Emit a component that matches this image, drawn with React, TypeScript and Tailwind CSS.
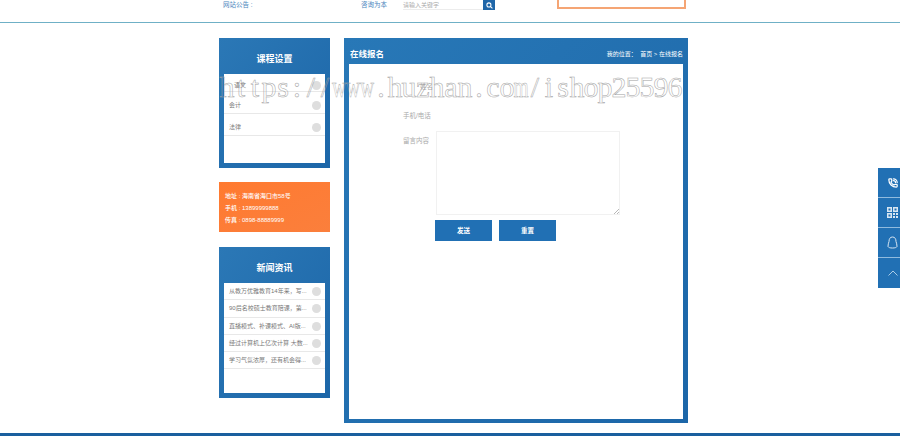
import React from "react";
import { PhoneCall } from "lucide-react";

const wm = "https://www.huzhan.com/ishop25596".split("");
const courses = ["语文", "会计", "法律"];
const news = ["从教万优雅教育14年来，写...", "90后名校硕士教育陪课，第...", "直播模式、补课模式、AI版...", "经过计算机上亿次计算 大数...", "学习气氛浓厚，还有机会得..."];

function Dot() {
  return <span className="w-[9px] h-[9px] rounded-full bg-[#dedede] shrink-0" />;
}

function SideCard({ title, h, children }: { title: string; h: string; children: React.ReactNode }) {
  return (
    <div className={`${h} flex flex-col bg-gradient-to-br from-[#2b78b6] to-[#1c66a8] px-[5px] pb-[5px]`}>
      <div className="h-[36px] shrink-0 flex items-end justify-center pb-[9px] text-white text-[9px] leading-[12px] font-bold">{title}</div>
      <div className="flex-1 bg-white">{children}</div>
    </div>
  );
}

export default function App() {
  return (
    <div className="relative w-[900px] h-[436px] overflow-hidden bg-white font-['Liberation_Sans','Noto_Sans_CJK_SC',sans-serif]">
      <header className="h-[23px] border-b border-[#6fb0c6] flex pl-[223px] items-start">
        <span className="w-[138px] text-[6.5px] leading-[10px] text-[#4a86bd]">网站公告 :</span>
        <span className="w-[42px] text-[6.5px] leading-[10px] text-[#4a86bd]">咨询为本</span>
        <div className="w-[80px] h-[10px] border-b border-[#ececec] text-[6px] leading-[10px] text-[#aaa]">请输入关键字</div>
        <div className="w-[12px] h-[10px] bg-[#1f66a8] flex items-center justify-center">
          <svg width="7" height="7" viewBox="0 0 24 24" fill="none" stroke="#fff" strokeWidth="3.5"><circle cx="10" cy="10" r="7" /><path d="M15 15l7 7" /></svg>
        </div>
        <div className="ml-[62px] w-[129px] h-[9px] border-2 border-t-0 border-[#f5a574] bg-white" />
      </header>

      <main className="ml-[219px] mt-[15px] flex gap-[14px] items-start">
        <aside className="w-[111px] flex flex-col">
          <SideCard title="课程设置" h="h-[130px]">
            {courses.map((c, i) => (
              <div key={c} className={`${i === 0 ? "h-[18px] pl-[10px]" : "h-[22px] pl-[5px]"} pt-[6px] border-b border-[#e8e8e8] flex items-center justify-between pr-[4px] text-[6px] text-[#777]`}>
                <span>{c}</span>
                <Dot />
              </div>
            ))}
          </SideCard>
          <div className="mt-[14px] h-[50px] bg-gradient-to-br from-[#ff7a30] to-[#fb7f3c] text-white text-[6px] font-medium pl-[6px] pt-[8px] leading-[12px]">
            <p>地址 : 海南省海口市58号</p>
            <p>手机 : 13899999888</p>
            <p>传真 : 0898-88889999</p>
          </div>
          <div className="mt-[15px]">
            <SideCard title="新闻资讯" h="h-[151px]">
              {news.map((n) => (
                <div key={n} className="h-[17.25px] pt-[1px] border-b border-[#e8e8e8] flex items-center justify-between pl-[5px] pr-[4px] text-[6px] text-[#777] whitespace-nowrap">
                  <span>{n}</span>
                  <Dot />
                </div>
              ))}
            </SideCard>
          </div>
        </aside>

        <section className="w-[344px] h-[385px] flex flex-col bg-gradient-to-br from-[#2878b7] to-[#1c66a8] pl-[5px] pr-[5px] pb-[4px]">
          <div className="h-[26px] shrink-0 flex items-end justify-between pb-[3px] pl-[1px] text-white">
            <span className="text-[8.5px] font-bold leading-[14px]">在线报名</span>
            <span className="text-[6px] leading-[12px] mb-[1px] whitespace-pre">我的位置：  首页 &gt; 在线报名</span>
          </div>
          <div className="flex-1 bg-white pl-[54px] pt-[18px]">
            <div className="ml-[17px] h-[10px] text-[6.5px] leading-[10px] text-[#aaa]">姓名</div>
            <div className="mt-[19px] h-[10px] text-[6.5px] leading-[10px] text-[#aaa]">手机/电话</div>
            <div className="mt-[10px] flex">
              <span className="w-[33px] text-[6.5px] leading-[10px] pt-[5px] text-[#aaa]">留言内容</span>
              <div className="relative w-[184px] h-[84px] border border-[#f1f1f1]">
                <svg className="absolute right-0 bottom-0" width="6" height="6" viewBox="0 0 6 6" stroke="#999" strokeWidth="0.7"><path d="M1 6l5-5M4 6l2-2" /></svg>
              </div>
            </div>
            <div className="mt-[5px] ml-[32px] flex gap-[7px]">
              <button className="w-[57px] h-[21px] bg-[#2170b4] text-white text-[6.5px] font-bold">发送</button>
              <button className="w-[57px] h-[21px] bg-[#2170b4] text-white text-[6.5px] font-bold">重置</button>
            </div>
          </div>
        </section>
      </main>

      <div className="absolute left-0 right-0 bottom-0 h-[3px] bg-[#1a5f9e]" />

      <div className="absolute right-0 top-[168px] w-[22px] flex flex-col bg-[#2170b4] text-white">
        <div className="h-[30px] flex items-center pl-[10px] border-b border-[#8fbade]">
          <PhoneCall size={10} strokeWidth={3} />
        </div>
        <div className="h-[30px] flex items-center pl-[9px] border-b border-[#8fbade]">
          <svg width="11" height="11" viewBox="0 0 11 11" fill="#d8e6f2"><path fillRule="evenodd" d="M0 0h5v5H0zM1.500 1.500v2h2v-2zM6 0h5v5H6zM7.500 1.500v2h2v-2zM0 6h5v5H0zM1.500 7.500v2h2v-2z" /><rect x="6" y="6" width="2" height="2" /><rect x="9" y="6" width="2" height="2" /><rect x="6" y="9" width="2" height="2" /><rect x="9" y="9" width="2" height="2" /></svg>
        </div>
        <div className="h-[30px] flex items-center pl-[9px] border-b border-[#8fbade]">
          <svg width="11" height="13" viewBox="0 0 11 13" fill="none" stroke="#d8e6f2" strokeWidth="1"><path d="M5.500 1C3 1 2 3 2 5.500 1.500 7 1 8.500 1 10.500c.5 1 2 1.500 4.500 1.500s4-.5 4.500-1.500c0-2-.5-3.500-1-5C9 3 8 1 5.500 1z" /></svg>
        </div>
        <div className="h-[30px] flex items-center pl-[10px]">
          <svg width="10" height="6" viewBox="0 0 10 6" fill="none" stroke="#a9cbe6" strokeWidth="1"><path d="M0.500 5.500l4.500-4.500 4.500 4.500" /></svg>
        </div>
      </div>

      <div className="absolute left-[220px] top-[72px] flex pointer-events-none font-['Liberation_Serif',serif] text-[30px] leading-[30px] text-transparent [-webkit-text-stroke:0.5px_#a3a3a3]">
        {wm.map((c, i) => (
          <span key={i} className={`w-[14px] inline-flex justify-center ${c === "w" || c === "m" ? "scale-x-[0.65]" : ""}`}>{c}</span>
        ))}
      </div>
    </div>
  );
}
